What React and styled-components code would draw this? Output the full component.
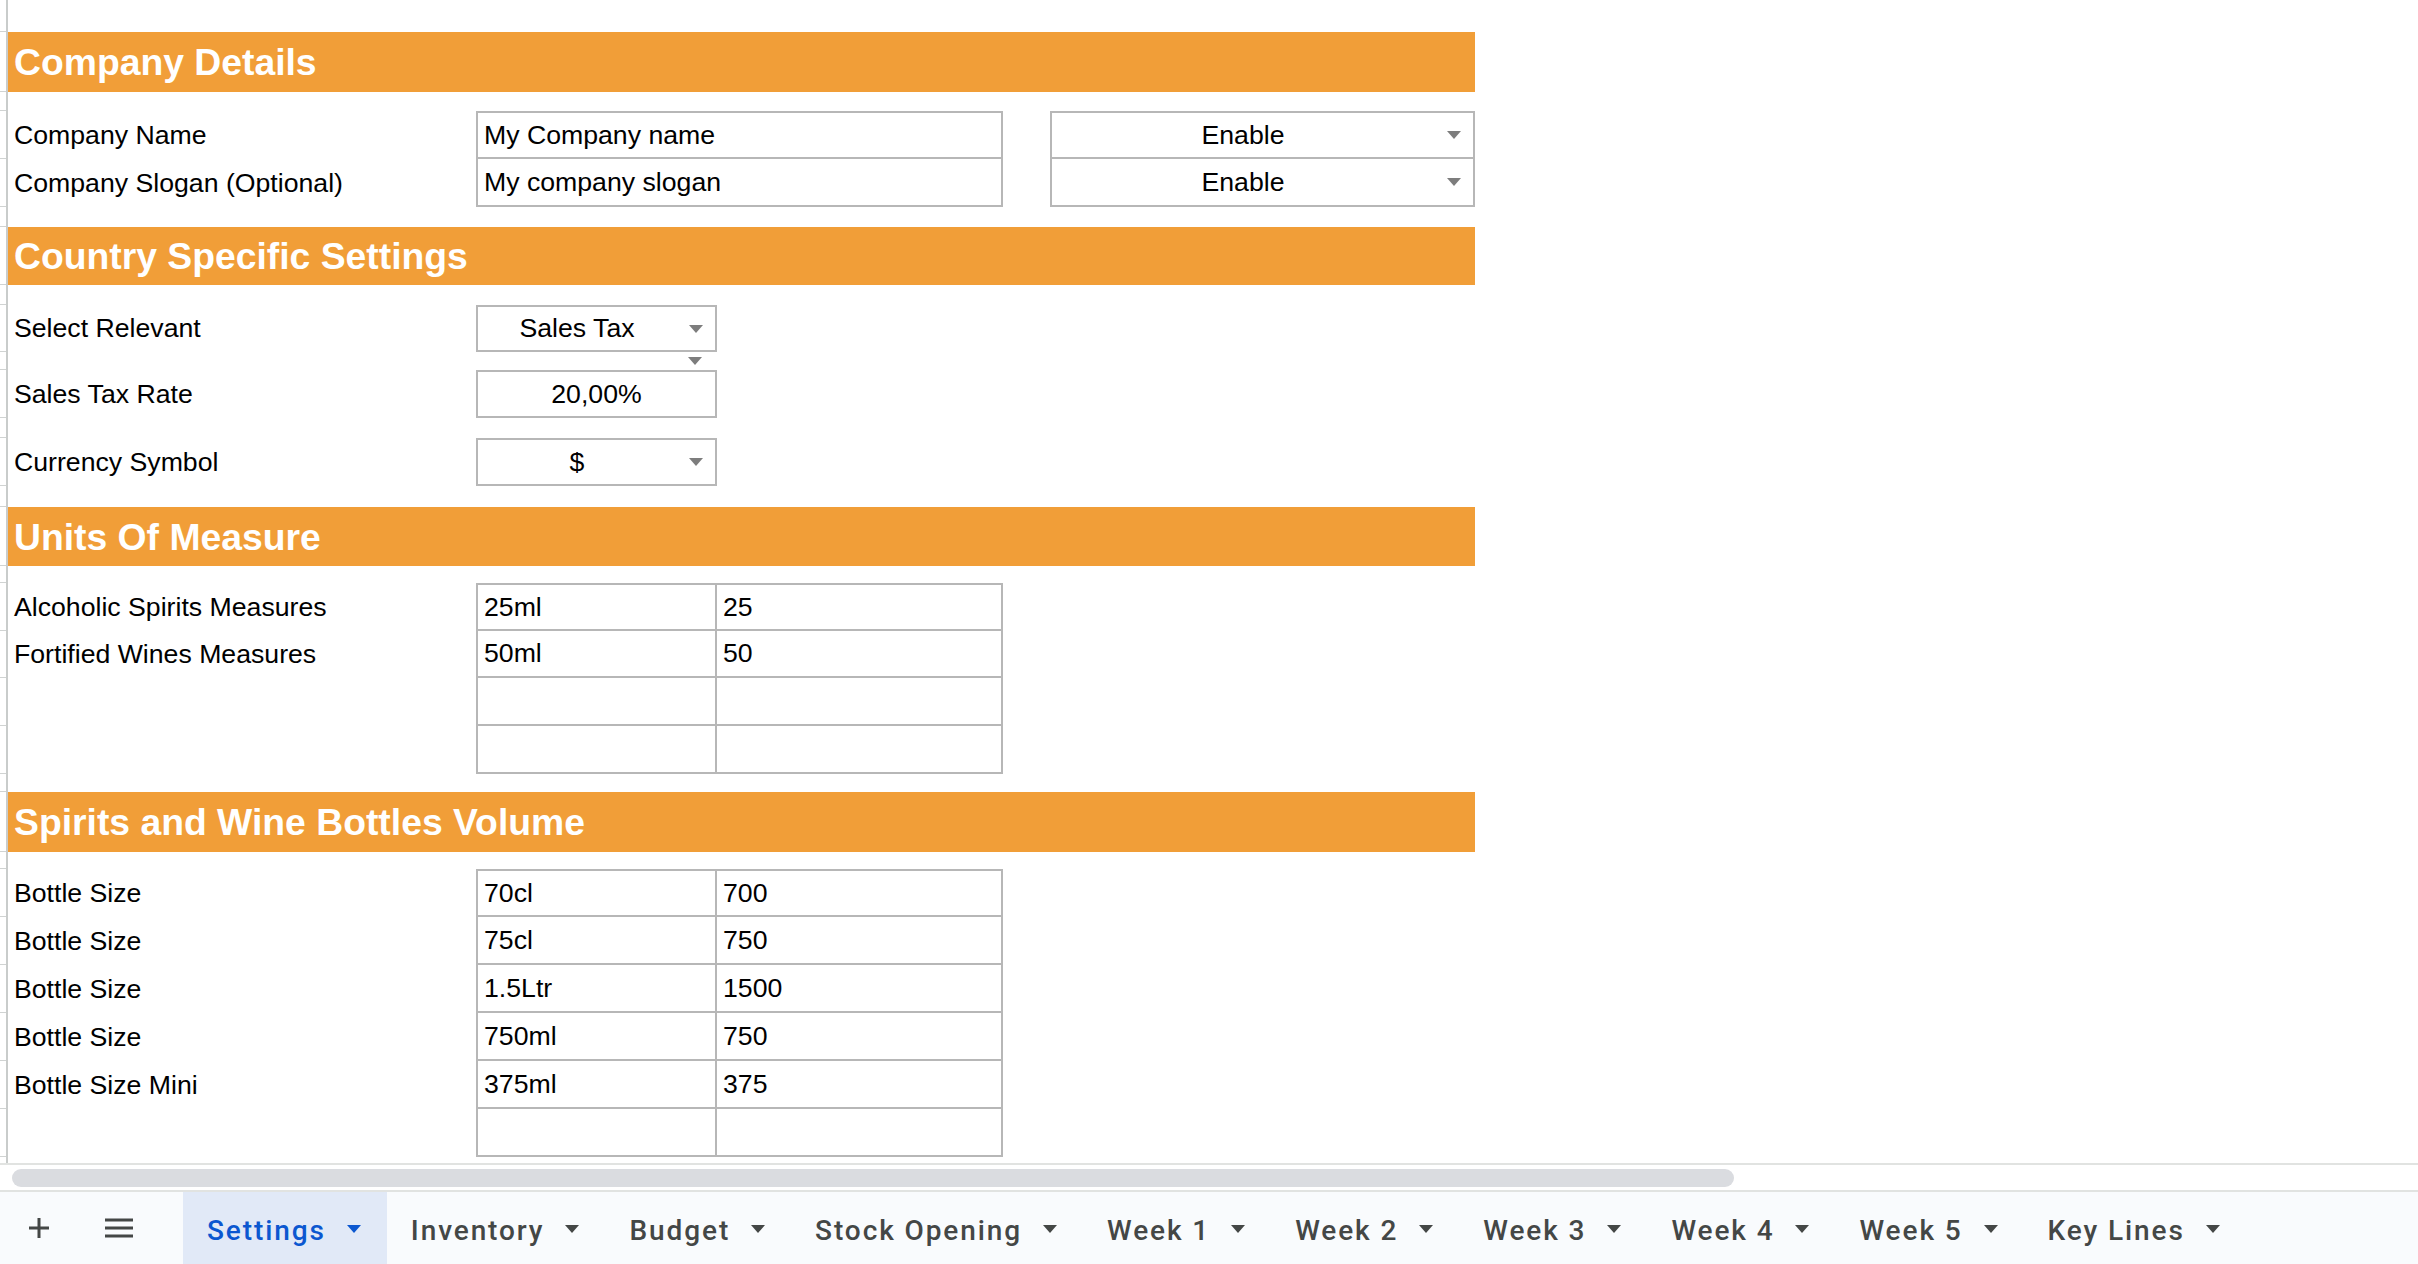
import React from "react";
import styled, { createGlobalStyle } from "styled-components";

const GlobalStyle = createGlobalStyle`
  html, body { margin: 0; padding: 0; background: #ffffff; }
  body { font-family: "Liberation Sans", Arial, sans-serif; }
  #root { height: 100vh; }
`;

/* stub | rail | A | B | C | D | E | rest */
const COLUMNS = "6px 2px 468px 241px 286px 47px 425px 1fr";
const GRID = "#b7b7b7";
const TICK = "#d0d3d2";

const Page = styled.div`
  height: 100vh;
  display: flex;
  flex-direction: column;
  overflow: hidden;
`;

const Sheet = styled.div`
  flex: 1;
  display: flex;
  flex-direction: column;
  overflow: hidden;
`;

const Row = styled.div`
  display: grid;
  grid-template-columns: ${COLUMNS};
  height: ${(p) => p.$h}px;
  flex: ${(p) => (p.$fill ? 1 : "none")};
`;

const Stub = styled.div`
  border-bottom: ${(p) => (p.$tick ? `1px solid ${TICK}` : "none")};
`;

const Rail = styled.div`
  background: #c9cccb;
`;

const Band = styled.div`
  grid-column: 3 / 8;
  background: #f19e38;
  color: #ffffff;
  font-weight: 700;
  font-size: 37.3px;
  display: flex;
  align-items: center;
  padding-left: 6px;
  padding-top: 1px;
  white-space: nowrap;
`;

const Label = styled.div`
  grid-column: 3;
  display: flex;
  align-items: center;
  padding-left: 6px;
  font-size: 26.67px;
  color: #000;
  white-space: nowrap;
`;

const Cell = styled.div`
  grid-column: ${(p) => p.$col};
  box-sizing: border-box;
  border-top: ${(p) => (p.$t ? `2px solid ${GRID}` : "none")};
  border-left: ${(p) => (p.$l ? `2px solid ${GRID}` : "none")};
  border-right: ${(p) => (p.$r ? `2px solid ${GRID}` : "none")};
  border-bottom: ${(p) => (p.$b ? `2px solid ${GRID}` : "none")};
  display: flex;
  align-items: center;
  justify-content: ${(p) => (p.$center ? "center" : "flex-start")};
  padding-left: ${(p) => (p.$center ? 0 : 6)}px;
  font-size: 26.67px;
  color: #000;
  white-space: nowrap;
  overflow: hidden;
`;

const Chip = styled.div`
  grid-column: ${(p) => p.$col};
  box-sizing: border-box;
  border-top: ${(p) => (p.$t ? `2px solid ${GRID}` : "none")};
  border-left: 2px solid ${GRID};
  border-right: 2px solid ${GRID};
  border-bottom: 2px solid ${GRID};
  display: flex;
  align-items: center;
  font-size: 26.67px;
  color: #000;
  white-space: nowrap;
`;

const ChipValue = styled.span`
  flex: 1;
  text-align: center;
`;

const Caret = styled.span`
  width: 0;
  height: 0;
  border-left: 7px solid transparent;
  border-right: 7px solid transparent;
  border-top: 8px solid ${(p) => p.$color || "#7d7d7d"};
  margin: ${(p) => p.$margin || "0 12px 0 13px"};
  flex: none;
`;

const LooseCaret = styled.div`
  grid-column: 4;
  display: flex;
  justify-content: flex-end;
  align-items: center;
  padding-right: 15px;
`;

const ScrollZone = styled.div`
  height: 29px;
  box-sizing: border-box;
  border-top: 2px solid #e1e3e1;
  border-bottom: 2px solid #e1e3e1;
  display: flex;
  align-items: center;
  padding-left: 12px;
`;

const Thumb = styled.div`
  width: 1722px;
  height: 18px;
  border-radius: 9px;
  background: #dadce0;
`;

const TabBar = styled.div`
  height: 72px;
  background: #f9fbfd;
  display: flex;
  align-items: stretch;
  font-family: Roboto, "Open Sans", sans-serif;
`;

const IconButton = styled.div`
  width: ${(p) => p.$w}px;
  display: flex;
  align-items: center;
  justify-content: center;
  flex: none;
`;

const Tab = styled.div`
  display: flex;
  align-items: center;
  padding: 4px 26px 0 24px;
  background: ${(p) => (p.$active ? "#e1e9f7" : "transparent")};
  color: ${(p) => (p.$active ? "#0b57d0" : "#444746")};
  font-size: 28px;
  font-weight: 500;
  letter-spacing: 1.9px;
  white-space: nowrap;
`;

const TabName = styled.span`
  margin-right: 21px;
`;

const TabCaret = styled(Caret)`
  margin: -3px 0 0 0;
`;

const Spacer = styled.div`
  width: 23px;
  flex: none;
`;

function Plus() {
  return (
    <svg width="22" height="22" viewBox="0 0 22 22">
      <rect x="9.5" y="1" width="3" height="20" fill="#444746" />
      <rect x="1" y="9.5" width="20" height="3" fill="#444746" />
    </svg>
  );
}

function Burger() {
  return (
    <svg width="28" height="20" viewBox="0 0 28 20">
      <rect x="0" y="0.5" width="28" height="3" fill="#444746" />
      <rect x="0" y="8.5" width="28" height="3" fill="#444746" />
      <rect x="0" y="16.5" width="28" height="3" fill="#444746" />
    </svg>
  );
}

function Line({ h, children, tick = true, fill }) {
  return (
    <Row $h={h} $fill={fill}>
      <Stub $tick={tick} />
      <Rail />
      {children}
    </Row>
  );
}

const measures = [
  ["Alcoholic Spirits Measures", "25ml", "25"],
  ["Fortified Wines Measures", "50ml", "50"],
  ["", "", ""],
  ["", "", ""],
];
const measureHeights = [48, 47, 48, 48];

const bottles = [
  ["Bottle Size", "70cl", "700"],
  ["Bottle Size", "75cl", "750"],
  ["Bottle Size", "1.5Ltr", "1500"],
  ["Bottle Size", "750ml", "750"],
  ["Bottle Size Mini", "375ml", "375"],
  ["", "", ""],
];

const tabs = [
  "Settings",
  "Inventory",
  "Budget",
  "Stock Opening",
  "Week 1",
  "Week 2",
  "Week 3",
  "Week 4",
  "Week 5",
  "Key Lines",
];

function PairRows({ rows, heights }) {
  return rows.map(([label, a, b], i) => (
    <Line key={i} h={heights ? heights[i] : 48}>
      <Label>{label}</Label>
      <Cell $col={4} $t={i === 0} $l $r $b>
        {a}
      </Cell>
      <Cell $col={5} $t={i === 0} $r $b>
        {b}
      </Cell>
    </Line>
  ));
}

export default function App() {
  return (
    <>
      <GlobalStyle />
      <Page>
        <Sheet>
          <Line h={32} />
          <Line h={60}>
            <Band>Company Details</Band>
          </Line>
          <Line h={19} />
          <Line h={48}>
            <Label>Company Name</Label>
            <Cell $col="4 / 6" $t $l $r $b>
              My Company name
            </Cell>
            <Chip $col={7} $t>
              <ChipValue>Enable</ChipValue>
              <Caret />
            </Chip>
          </Line>
          <Line h={48}>
            <Label>Company Slogan (Optional)</Label>
            <Cell $col="4 / 6" $l $r $b>
              My company slogan
            </Cell>
            <Chip $col={7}>
              <ChipValue>Enable</ChipValue>
              <Caret />
            </Chip>
          </Line>
          <Line h={20} />
          <Line h={58}>
            <Band>Country Specific Settings</Band>
          </Line>
          <Line h={20} />
          <Line h={47}>
            <Label>Select Relevant</Label>
            <Chip $col={4} $t>
              <ChipValue>Sales Tax</ChipValue>
              <Caret />
            </Chip>
          </Line>
          <Line h={18}>
            <LooseCaret>
              <Caret $margin="0" />
            </LooseCaret>
          </Line>
          <Line h={48}>
            <Label>Sales Tax Rate</Label>
            <Cell $col={4} $t $l $r $b $center>
              20,00%
            </Cell>
          </Line>
          <Line h={20} />
          <Line h={48}>
            <Label>Currency Symbol</Label>
            <Chip $col={4} $t>
              <ChipValue>$</ChipValue>
              <Caret />
            </Chip>
          </Line>
          <Line h={21} />
          <Line h={59}>
            <Band>Units Of Measure</Band>
          </Line>
          <Line h={17} />
          <PairRows rows={measures} heights={measureHeights} />
          <Line h={18} />
          <Line h={60}>
            <Band>Spirits and Wine Bottles Volume</Band>
          </Line>
          <Line h={17} />
          <PairRows rows={bottles} />
          <Line h={6} fill tick={false} />
        </Sheet>
        <ScrollZone>
          <Thumb />
        </ScrollZone>
        <TabBar>
          <IconButton $w={78}>
            <Plus />
          </IconButton>
          <IconButton $w={82}>
            <Burger />
          </IconButton>
          <Spacer />
          {tabs.map((name, i) => (
            <Tab key={name} $active={i === 0}>
              <TabName>{name}</TabName>
              <TabCaret $color={i === 0 ? "#0b57d0" : "#444746"} />
            </Tab>
          ))}
        </TabBar>
      </Page>
    </>
  );
}
